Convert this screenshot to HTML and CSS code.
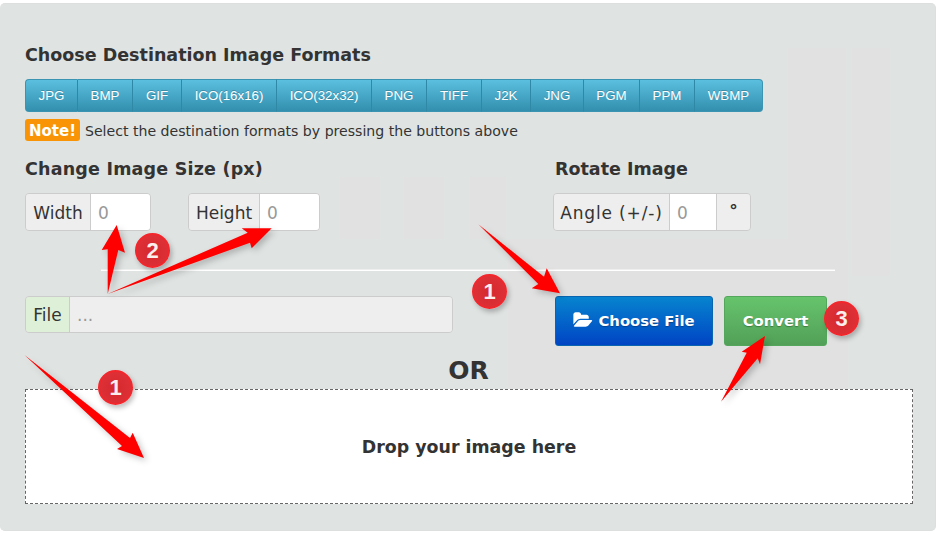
FILE: index.html
```html
<!DOCTYPE html>
<html lang="en">
<head>
<meta charset="utf-8">
<title>Image Converter</title>
<link rel="stylesheet" href="styles.css">
</head>
<body>
<main class="panel">
  <svg class="backdrop" width="936" height="528" viewBox="0 3 936 528" aria-hidden="true">
    <rect class="shade" x="340" y="176" width="40" height="62"/>
    <rect class="shade" x="404" y="176" width="40" height="62"/>
    <rect class="shade" x="470" y="176" width="36" height="62"/>
    <rect class="shade" x="788" y="47" width="58" height="228"/>
    <rect class="shade" x="852" y="47" width="38" height="228"/>
    <rect class="shade" x="508" y="238" width="340" height="150"/>
  </svg>
  <h2 class="heading">Choose Destination Image Formats</h2>
  <div class="formats">
    <button class="fmt w53">JPG</button>
    <button class="fmt w55">BMP</button>
    <button class="fmt w49">GIF</button>
    <button class="fmt w95">ICO(16x16)</button>
    <button class="fmt w95">ICO(32x32)</button>
    <button class="fmt w55">PNG</button>
    <button class="fmt w55">TIFF</button>
    <button class="fmt w49">J2K</button>
    <button class="fmt w53">JNG</button>
    <button class="fmt w56">PGM</button>
    <button class="fmt w55">PPM</button>
    <button class="fmt w68">WBMP</button>
  </div>
  <p class="note"><span class="note-tag">Note!</span><span class="note-text">Select the destination formats by pressing the buttons above</span></p>
  <div class="options">
    <section class="size-col">
      <h2 class="heading size-heading">Change Image Size (px)</h2>
      <div class="size-groups">
        <div class="group">
          <span class="addon addon-width">Width</span>
          <span class="field field-size">0</span>
        </div>
        <div class="group">
          <span class="addon addon-height">Height</span>
          <span class="field field-size">0</span>
        </div>
      </div>
    </section>
    <section class="rotate-col">
      <h2 class="heading rotate-heading">Rotate Image</h2>
      <div class="group">
        <span class="addon addon-angle">Angle (+/-)</span>
        <span class="field field-angle">0</span>
        <span class="addon addon-deg">°</span>
      </div>
    </section>
  </div>
  <hr class="divider">
  <div class="file-row">
    <div class="group file-group">
      <span class="addon addon-file">File</span>
      <span class="field field-file">...</span>
    </div>
    <button class="action choose">
      <svg class="folder" viewBox="0 0 1920 1792" width="20" height="18" aria-hidden="true"><path fill="currentColor" d="M1879 952q0 35-53 95l-336 396q-43 51-120.5 86.5T1226 1565H138q-34 0-60.5-13T51 1509q0-35 53-95l336-396q43-51 120.5-86.5T704 896h1088q34 0 60.5 13t26.5 43zM1536 608v160H704q-94 0-197 47.5T343 935L6 1331l-5 6q0-4-.5-12.5T0 1312V352q0-92 66-158t158-66h320q92 0 158 66t66 158v32h544q92 0 158 66t66 158z"/></svg>
      Choose File
    </button>
    <button class="action convert">Convert</button>
  </div>
  <div class="or">OR</div>
  <div class="drop">Drop your image here</div>

  <svg class="marks" width="936" height="528" viewBox="0 3 936 528" aria-hidden="true">
    <polygon points="478.3,224.3 544,276.7 546.7,268.3 560,293.3 531.7,288.3 538.3,284" class="arrow"/>
    <polygon points="24.5,355 130,438 132.7,432.7 144,458 117,449 122,446" class="arrow"/>
    <polygon points="721,401.7 746.7,352.7 741.7,351.7 765,336 760,364.3 757.7,358.3" class="arrow"/>
    <polygon points="107.7,294 107.7,249.3 101.7,250 116.7,225 125,252.7 118.3,250" class="arrow"/>
    <polygon points="107.7,294 247.7,232.7 241.7,228.3 271.7,228.3 251.7,248.3 250,242.7" class="arrow"/>
  </svg>
  <span class="badge b-a">1</span>
  <span class="badge b-b">2</span>
  <span class="badge b-c">1</span>
  <span class="badge b-d">3</span>
</main>
</body>
</html>
```
FILE: styles.css
```css
* { box-sizing: border-box; }
html, body { margin: 0; padding: 0; background: #fff; }
body { padding-top: 3px; width: 936px; height: 533px; overflow: hidden; font-family: "DejaVu Sans", sans-serif; color: #333; }

.panel {
  position: relative;
  height: 528px;
  padding: 40px 23px 0 25px;
  background: #dfe3e2;
  border: 1px solid #dcdfde;
  border-left: 0;
  border-radius: 5px;
}
.backdrop { position: absolute; left: 0; top: 0; }
.shade { fill: #e1e1e1; }
.heading, .formats, .note, .options, .divider, .file-row, .or, .drop { position: relative; }

.heading { margin: 0; font-size: 17.5px; line-height: 22px; font-weight: 700; color: #333; }
.size-heading { letter-spacing: .2px; }

.formats { display: flex; margin-top: 13px; height: 33px; width: 738px; }
.fmt {
  height: 33px;
  padding: 0;
  border: 1px solid #3a94b2;
  border-right-color: #2f88a6;
  border-left: 0;
  background: linear-gradient(#5bbfdf, #338fae);
  color: #fff;
  font: 13.3px "Liberation Sans", sans-serif;
  text-shadow: 0 -1px 0 rgba(0,0,0,.2);
}
.fmt:first-child { border-left: 1px solid #3a94b2; border-radius: 4px 0 0 4px; }
.fmt:last-child { border-right: 1px solid #3a94b2; border-radius: 0 4px 4px 0; }
.w49 { width: 49px; } .w53 { width: 53px; } .w55 { width: 55px; }
.w56 { width: 56px; } .w68 { width: 68px; } .w95 { width: 95px; }

.note { display: flex; margin: 7px 0 0; height: 22px; font-size: 14.1px; line-height: 24px; color: #333; }
.note-tag {
  display: block;
  width: 55px;
  height: 22px;
  margin-right: 5px;
  background: #f89406;
  border-radius: 3px;
  color: #fff;
  font-weight: 700;
  font-size: 15px;
  line-height: 24px;
  text-align: center;
}

.options { display: flex; margin-top: 17px; }
.size-col { width: 528px; }
.size-groups { display: flex; gap: 37px; margin-top: 13px; }
.rotate-col .group { margin-top: 13px; }
.rotate-heading { padding-left: 2px; }

.group {
  display: flex;
  height: 38px;
  width: max-content;
  border: 1px solid #ccc;
  border-radius: 4px;
  overflow: hidden;
  font-size: 17px;
  line-height: 38px;
}
.addon { display: block; background: #eee; color: #333; text-align: center; border-right: 1px solid #ccc; }
.addon-width { width: 65px; }
.addon-height { width: 71px; }
.addon-angle { width: 116px; letter-spacing: .85px; }
.addon-deg { width: 34px; border-right: 0; border-left: 1px solid #ccc; line-height: 34px; font-weight: 700; }
.addon-file { width: 44px; background: #dff0d8; }
.field { display: block; background: #fff; color: #999; padding-left: 7px; }
.field-size { width: 59px; }
.field-angle { width: 46px; }

.divider {
  width: 734px;
  height: 2px;
  margin: 38px 0 0 76px;
  border: 0;
  border-top: 1px solid #eee;
  border-bottom: 1px solid #fff;
  background: transparent;
}

.file-row { display: flex; align-items: flex-start; height: 50px; margin-top: 25px; }
.file-group { height: 37px; width: 428px; line-height: 37px; }
.field-file { flex: 1; background: #eee; color: #999; }

.action {
  height: 50px;
  padding: 0 0 2px;
  border-radius: 3px;
  color: #fff;
  font: 700 14.8px "DejaVu Sans", sans-serif;
  text-shadow: 0 1px 1px rgba(0,0,0,.3);
}
.choose {
  display: flex;
  align-items: center;
  justify-content: center;
  gap: 5px;
  width: 158px;
  margin-left: 102px;
  border: 1px solid #0a65b0;
  background: linear-gradient(#0784cf, #0044c4);
}
.convert {
  width: 103px;
  margin-left: 11px;
  border: 1px solid #54a65c;
  background: linear-gradient(#66c46c, #52a058);
}
.folder { flex: none; }

.or { margin-top: 10px; height: 30px; line-height: 30px; text-align: center; font-size: 25px; font-weight: 700; color: #333; }

.drop {
  display: flex;
  align-items: center;
  justify-content: center;
  width: 888px;
  height: 115px;
  margin-top: 3px;
  background: #fff;
  border: 1px dashed #666;
  font-size: 17.4px;
  font-weight: 700;
  color: #333;
}

.marks { position: absolute; left: 0; top: -1px; pointer-events: none; overflow: visible; }
.arrow { fill: #fe0000; filter: drop-shadow(3px 3px 3px rgba(0,0,0,.22)); }

.badge {
  position: absolute;
  width: 35px;
  height: 35px;
  border: 2px solid #f3262c;
  border-radius: 50%;
  background: radial-gradient(circle at 50% 55%, #d4282e, #e0333a);
  color: #fdeeee;
  font: 700 22px/31px "Liberation Sans", sans-serif;
  text-align: center;
  box-shadow: 2px 3px 5px rgba(0,0,0,.25);
}
.b-a { left: 472px; top: 270px; }
.b-b { left: 135px; top: 229px; }
.b-c { left: 98px; top: 366px; }
.b-d { left: 824px; top: 297px; }
```
